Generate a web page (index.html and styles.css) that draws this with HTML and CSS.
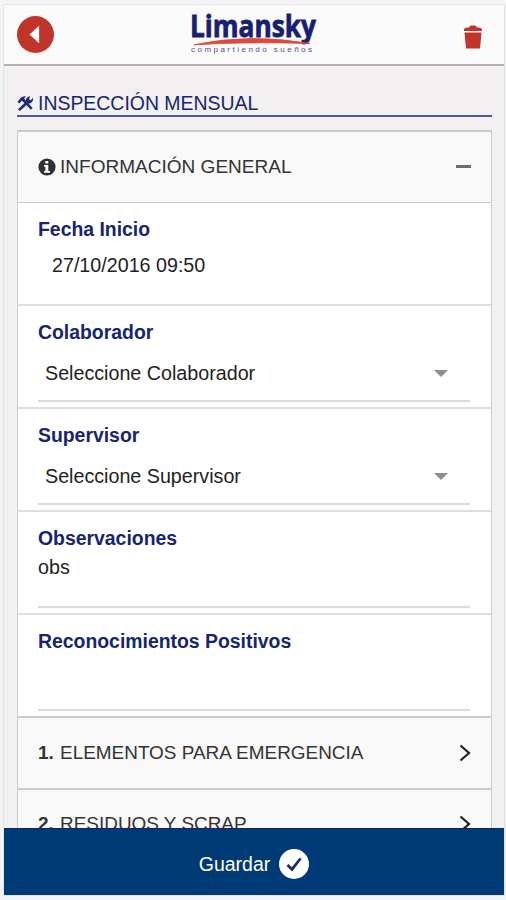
FILE: index.html
```html
<!DOCTYPE html>
<html lang="es">
<head>
<meta charset="utf-8">
<title>Limansky</title>
<link rel="stylesheet" href="styles.css">
</head>
<body>
<div class="app">
  <header class="bar">
    <svg class="back" viewBox="0 0 36 36"><circle cx="18" cy="18" r="18" fill="#c0342a"/><path d="M12.2 18 21.5 9.5v17z" fill="#fff"/></svg>
    <svg class="logo" viewBox="0 0 130 48">
      <text class="logo-name" x="1" y="26.500" textLength="126" lengthAdjust="spacingAndGlyphs">Limansky</text>
      <path d="M5 34.800Q60 23 121 33.500Q60 31.500 5 34.800z" fill="#dc4a3d" stroke="#dc4a3d" stroke-width=".9"/>
      <text class="logo-tag" x="2" y="42" textLength="121" lengthAdjust="spacing">compartiendo sueños</text>
    </svg>
    <svg class="trash" viewBox="0 0 20 24"><path d="M1 6V4.500Q1 3 4 2.600H6.200Q6.500.5 8 .5h4q1.500 0 1.800 2.100H16q3 .4 3 1.900V6z" fill="#c0342a"/><path d="M1.500 7.500h17L17 23.500H3z" fill="#c0342a"/></svg>
  </header>
  <main class="content">
    <h1 class="title">
      <svg class="tools" viewBox="0 0 18 18"><path d="M.5 7.500 4 3Q6.500.8 9.500 1.500L7.500 3.800 9 5.500 16.500 13.800 14.800 15.500 6.500 7.200 5 6 2.500 9z" fill="#1d2a73"/><path d="M1 15 9.200 7.500Q8.500 2.500 13.800 1L12.800 4.500 14.500 5.500 17 3Q17.800 9 11.500 9.300L3 17z" fill="#1d2a73"/></svg>
      <span>INSPECCIÓN MENSUAL</span>
    </h1>
    <section class="card">
      <div class="section open">
        <svg class="info" viewBox="0 0 18 18"><circle cx="9" cy="9" r="8.600" fill="#303030"/><path d="M7.300 3h3v2.600h-3zM6 7h4.300v6H12v1.700H6V13h1.400V8.700H6z" fill="#fff"/></svg>
        <span class="name">INFORMACIÓN GENERAL</span>
        <span class="minus"></span>
      </div>
      <div class="field"><label>Fecha Inicio</label><div class="value date">27/10/2016 09:50</div></div>
      <div class="field"><label>Colaborador</label><div class="value select lined"><span>Seleccione Colaborador</span><i class="caret"></i></div></div>
      <div class="field"><label>Supervisor</label><div class="value select lined"><span>Seleccione Supervisor</span><i class="caret"></i></div></div>
      <div class="field"><label>Observaciones</label><div class="value area lined">obs</div></div>
      <div class="field last"><label>Reconocimientos Positivos</label><div class="value area lined"></div></div>
      <div class="section"><b>1.</b><span class="name long">ELEMENTOS PARA EMERGENCIA</span><svg class="chev" viewBox="0 0 12 18"><path d="M1.500 1.500 10 9 1.500 16.500"/></svg></div>
      <div class="section second"><b>2.</b><span class="name long">RESIDUOS Y SCRAP</span><svg class="chev" viewBox="0 0 12 18"><path d="M1.500 1.500 10 9 1.500 16.500"/></svg></div>
    </section>
  </main>
  <footer class="save"><span>Guardar</span><svg viewBox="0 0 30 30"><circle cx="15" cy="15" r="15" fill="#fff"/><path d="M8.500 16 13 20.300 21.500 9.500" fill="none" stroke="#1b2c68" stroke-width="2.800"/></svg></footer>
</div>
</body>
</html>
```
FILE: styles.css
```css
* { box-sizing: border-box; }
body {
  margin: 0;
  height: 900px;
  overflow: hidden;
  padding: 4px 0 4px 3px;
  background: #f4f4f4;
  font-family: "Liberation Sans", Arial, sans-serif;
  font-size: 19.5px;
  color: #222;
}
.app {
  height: 892px;
  width: 502px;
  display: flex;
  flex-direction: column;
  border: 1px solid #e6e4e5;
  border-right-color: #e2e2e2;
  background: #f2f0f1;
}
.bar {
  height: 61px;
  flex: none;
  display: flex;
  align-items: center;
  justify-content: space-between;
  padding: 0 21px 0 13px;
  background: #fafafa;
  border-bottom: 2px solid #b3b1b2;
}
.back { width: 37px; height: 37px; }
.logo { width: 130px; height: 48px; margin: -1px 3px 0 -6px; overflow: visible; }
.logo-name {
  font: bold 31px "Open Sans", sans-serif;
  fill: #17206f;
  stroke: #17206f;
  stroke-width: .8;
}
.logo-tag { font: 8px "Liberation Sans", sans-serif; fill: #4c5190; }
.trash { width: 20px; height: 24px; margin-top: 4px; }
.content {
  flex: 1;
  min-height: 0;
  overflow: hidden;
  padding: 26px 12px 0 13px;
}
.title {
  margin: 0 0 13px;
  height: 25px;
  display: flex;
  align-items: center;
  gap: 4px;
  border-bottom: 2px solid #4a5a93;
  color: #17256f;
  font-size: 19.45px;
  font-weight: normal;
  white-space: nowrap;
}
.tools { width: 17px; height: 17px; }
.card {
  border: 1px solid #cbcdce;
  border-top: 2px solid #c8c8c8;
  background: #fff;
}
.section {
  height: 72px;
  display: flex;
  align-items: center;
  padding: 0 20px 0 20px;
  background: #f8f8f8;
  border-bottom: 2px solid #c9cbcc;
  white-space: nowrap;
}
.open { height: 71px; border-bottom-width: 1px; }
.second { height: 70px; }
.section b { width: 22px; font-size: 19px; color: #333; }
.name { flex: 1; font-size: 19.05px; color: #333; }
.long { font-size: 18.95px; }
.info { width: 18px; height: 18px; margin-right: 4px; }
.minus { width: 15px; height: 3px; margin-top: -1px; background: #6b6b6b; }
.chev { width: 12px; height: 18px; fill: none; stroke: #222; stroke-width: 2.2; }
.field {
  height: 103px;
  padding: 14px 21px 0 20px;
  border-bottom: 2px solid #dcdfe1;
}
.last { border-bottom-color: #c9cbcc; }
.field label {
  display: block;
  height: 24px;
  line-height: 24px;
  color: #17256f;
  font-size: 19.4px;
  font-weight: bold;
}
.value { height: 58px; line-height: 24px; font-size: 19.7px; }
.date { padding: 12px 0 0 14px; }
.lined { border-bottom: 2px solid #d9dcdd; }
.select {
  display: flex;
  justify-content: space-between;
  padding: 17px 22px 0 7px;
}
.caret {
  margin-top: 9px;
  height: 0;
  border: 7px solid transparent;
  border-top-color: #8e8e8e;
  border-bottom: 0;
}
.area { padding-top: 5px; }
.save {
  height: 67px;
  flex: none;
  display: flex;
  align-items: center;
  justify-content: center;
  gap: 9px;
  padding-top: 4px;
  background: #003a75;
  border-top: 1px solid #14216b;
  color: #fff;
}
.save svg { width: 30px; height: 30px; }
```
